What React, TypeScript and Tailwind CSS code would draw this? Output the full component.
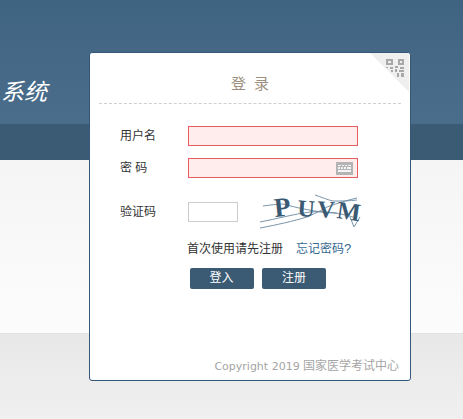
import { Fragment } from 'react';

const font = '[font-family:"Liberation_Sans","Noto_Sans_CJK_SC",sans-serif]';

function QrCorner() {
  return (
    <div className="absolute top-0 right-0 h-[40px] w-[40px]">
      <svg width="40" height="40" viewBox="0 0 40 40">
        <polygon points="0,0 39,0 39,39" fill="#efefef" />
        <g fill="#a8a8a8">
          <path d="M16 6h7v6h-7z M18 8v2h3v-2z" fillRule="evenodd" />
          <path d="M28 6h6v6h-6z M30 8v2h2v-2z" fillRule="evenodd" />
          <rect x="16" y="14" width="2" height="1" />
          <rect x="20" y="14" width="3" height="2" />
          <rect x="25" y="13" width="3" height="2" />
          <rect x="30" y="14" width="4" height="2" />
          <rect x="21" y="17" width="2" height="2" />
          <rect x="25" y="16" width="2" height="3" />
          <rect x="29" y="17" width="5" height="2" />
          <rect x="27" y="20" width="2" height="4" />
          <rect x="31" y="20" width="3" height="4" />
        </g>
      </svg>
    </div>
  );
}

function KeyboardIcon() {
  return (
    <svg width="17" height="13" viewBox="0 0 17 13" className="absolute top-[3px] right-[4px]">
      <rect width="17" height="13" fill="#b4b4b4" />
      <g fill="#f4f4f4">
        <rect x="2" y="3" width="3" height="1" />
        <rect x="6" y="3" width="2" height="1" />
        <rect x="9" y="3" width="2" height="1" />
        <rect x="12" y="3" width="3" height="1" />
        <rect x="2" y="5" width="2" height="2" />
        <rect x="5" y="5" width="2" height="2" />
        <rect x="8" y="5" width="2" height="2" />
        <rect x="11" y="5" width="4" height="2" />
        <rect x="2" y="8" width="13" height="2" />
      </g>
    </svg>
  );
}

function Captcha() {
  const letters = [
    { ch: 'P', x: 17, y: 25, r: -6, size: 27 },
    { ch: 'U', x: 39, y: 24, r: 4, size: 24 },
    { ch: 'V', x: 59, y: 25, r: 3, size: 24 },
    { ch: 'M', x: 78, y: 26, r: 8, size: 25 },
  ];

  return (
    <svg width="104" height="40" viewBox="0 0 104 40" className="overflow-visible">
      <g fill="none" stroke="#6b899f" strokeWidth="0.9">
        <path d="M2 30 C18 27 36 22 52 20 C66 19 82 21 95 25" />
        <path d="M2 36 C18 33 36 29 49 25 C58 21 64 18 69 15 C80 11 90 8 99 6" />
        <path d="M5 14 C12 13 20 12 25 12 C36 15 60 21 79 21" />
        <path d="M57 3 C63 5 70 8 75 9 C84 9 92 9 99 8" />
        <path d="M92 25 L96 35 L102 25" />
      </g>
      {letters.map((l) => (
        <text
          key={l.ch}
          x={l.x}
          y={l.y}
          transform={`rotate(${l.r} ${l.x} ${l.y})`}
          fill="#3a5a74"
          fontFamily='"Liberation Serif", serif'
          fontWeight="700"
          fontSize={l.size}
        >
          {l.ch}
        </text>
      ))}
    </svg>
  );
}

const inputError = 'h-[20px] w-[170px] border border-[#e95b5f] bg-[#ffecec]';

export default function App() {
  const rows = [
    { label: '用户名', keyboard: false },
    { label: '密 码', keyboard: true },
  ];

  return (
    <div className={`relative flex h-[419px] w-[463px] flex-col overflow-hidden bg-white ${font}`}>
      {/* Background bands */}
      <div className="flex h-[124px] items-end bg-gradient-to-b from-[#3f6482] to-[#4a6d8b] pb-[17px] pl-[1px]">
        <span className="text-[23px] leading-[30px] text-white italic">系统</span>
      </div>
      <div className="h-[36px] bg-[#3b5a73]" />
      <div className="h-[173px] bg-gradient-to-b from-[#f5f5f5] to-[#fcfcfc]" />
      <div className="flex-1 border-t border-[#e2e2e2] bg-gradient-to-b from-[#e8e8e8] to-[#f0f0f0]" />

      {/* Login card */}
      <div className="absolute top-[52px] left-[89px] flex h-[329px] w-[322px] flex-col rounded-[3px] border border-[#35587a] bg-white">
        <QrCorner />
        <h1 className="mt-[21px] pl-[2px] text-center text-[15px] leading-[20px] font-normal tracking-[2px] text-[#9c8f80]">
          登 录
        </h1>
        <div className="mx-[9px] mt-[9px] border-t border-dashed border-[#cfcfcf]" />

        <div className="mt-[22px] grid grid-cols-[68px_170px] items-center gap-y-[12px] pl-[30px] text-[12px] text-[#333]">
          {rows.map((row) => (
            <Fragment key={row.label}>
              <span>{row.label}</span>
              <div className={`relative ${inputError}`}>
                {row.keyboard && <KeyboardIcon />}
              </div>
            </Fragment>
          ))}
        </div>

        <div className="mt-[14px] flex items-center pl-[30px] text-[12px] text-[#333]">
          <span className="w-[68px]">验证码</span>
          <div className="h-[20px] w-[50px] border border-[#cccccc] bg-white" />
          <div className="ml-[20px]">
            <Captcha />
          </div>
        </div>

        <div className="mt-[8px] flex items-center pl-[97px] text-[12px] leading-[18px]">
          <span className="text-[#333]">首次使用请先注册</span>
          <span className="ml-[13px] text-[#35688f]">
            忘记密码<span className="text-[13px]">?</span>
          </span>
        </div>

        <div className="mt-[10px] flex gap-[8px] pl-[100px]">
          <button className="h-[21px] w-[64px] rounded-[2px] bg-[#3b5a73] pr-[1px] text-[12px] leading-[21px] text-white">
            登入
          </button>
          <button className="h-[21px] w-[64px] rounded-[2px] bg-[#3b5a73] text-[12px] leading-[21px] text-white">
            注册
          </button>
        </div>

        <div className="mt-auto pr-[11px] pb-[5px] text-right text-[12px] leading-[16px] text-[#a5a5a5]">
          <span className="[font-family:'DejaVu_Sans',sans-serif] text-[11px]">Copyright 2019</span> 国家医学考试中心
        </div>
      </div>
    </div>
  );
}
